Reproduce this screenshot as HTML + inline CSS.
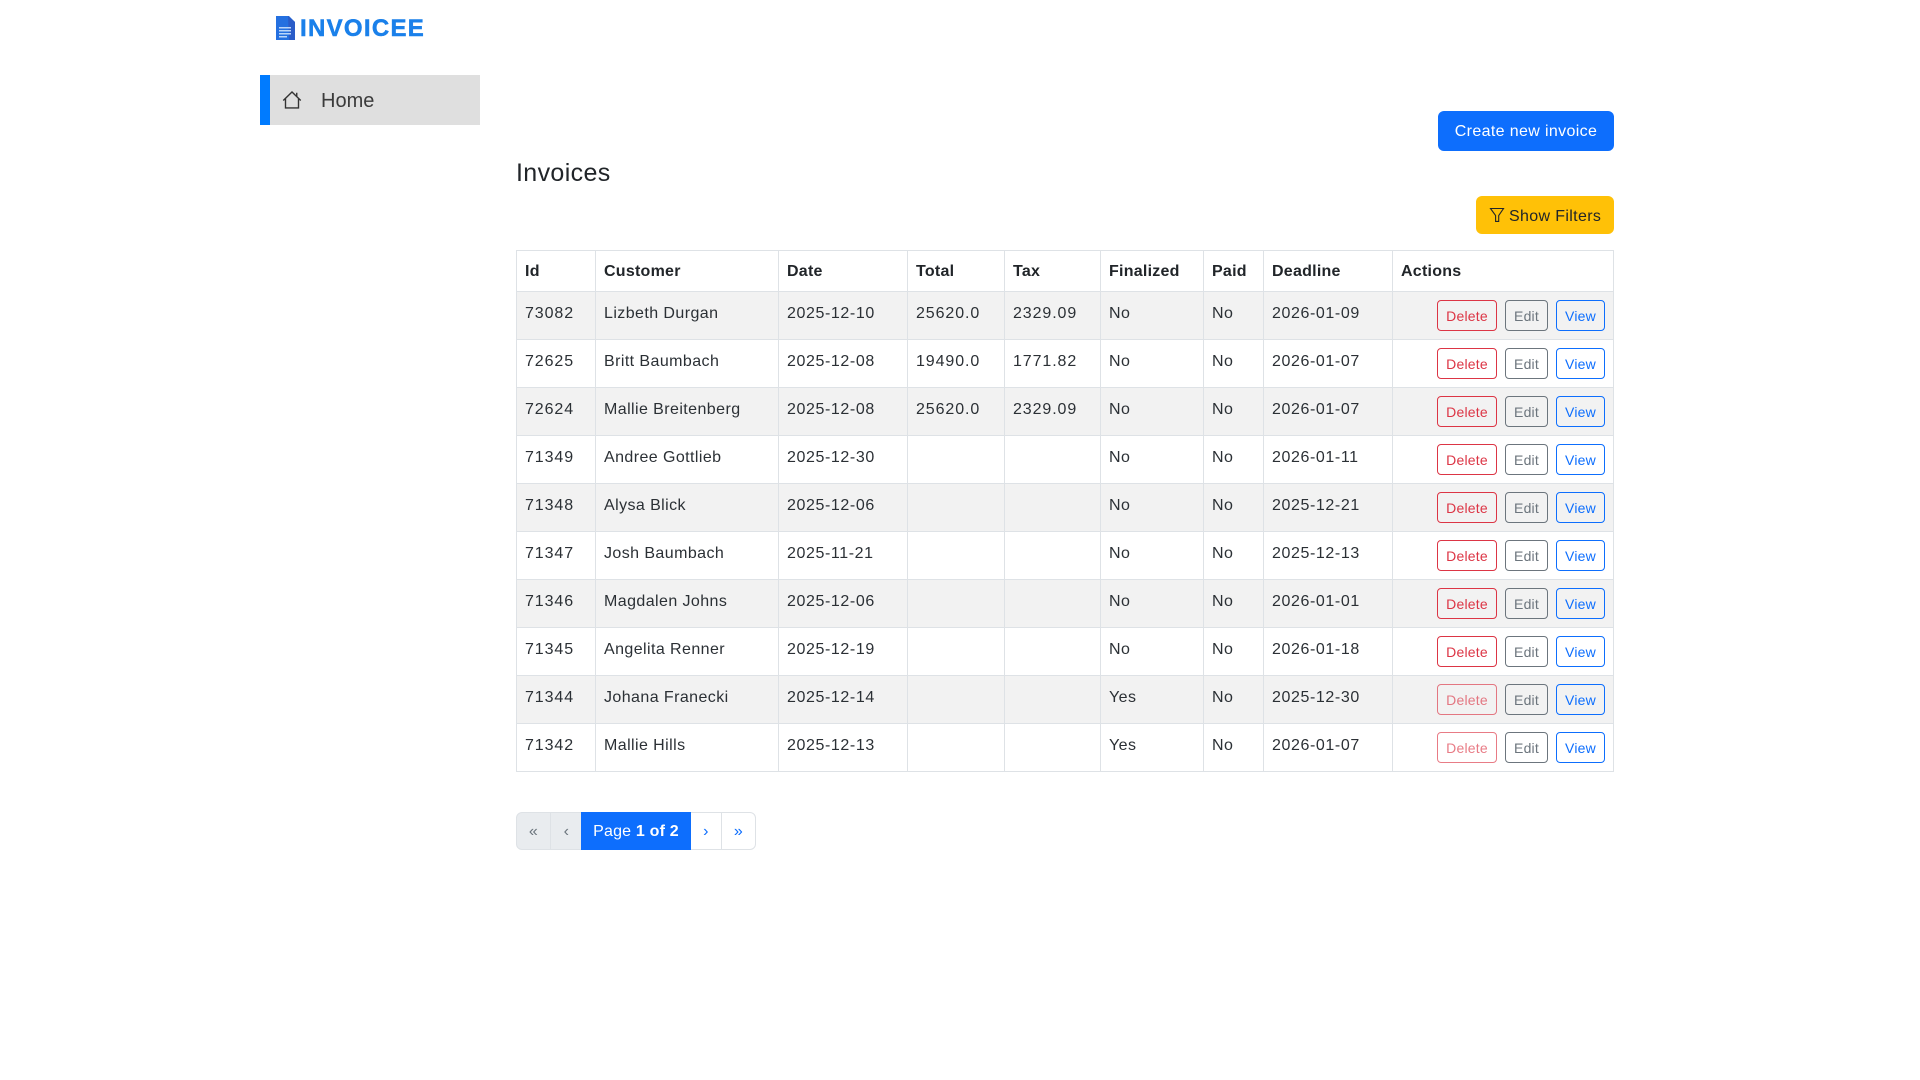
<!DOCTYPE html>
<html><head><meta charset="utf-8"><title>Invoices</title>
<style>
*{box-sizing:border-box}
html,body{margin:0;padding:0;background:#fff}
body{width:1920px;height:1080px;position:relative;overflow:hidden;font-family:"Liberation Sans",sans-serif;color:#212529;font-size:16px;letter-spacing:.42px}
.abs{position:absolute}
table{position:absolute;left:516px;top:250px;width:1097px;border-collapse:collapse;table-layout:fixed}
th,td{border:1px solid #dee2e6;padding:9px 8px 7px;line-height:24px;text-align:left;vertical-align:top;font-weight:400;position:relative;white-space:nowrap;color:#2b3035}
th{font-weight:700;color:#212529;letter-spacing:.25px;height:41px}
td{height:48px;padding-top:10px;padding-bottom:6px}
td:nth-child(1),td:nth-child(4),td:nth-child(5){letter-spacing:.9px}
td:nth-child(3),td:nth-child(8){letter-spacing:.6px}
tbody tr:nth-child(odd) td{background:#f2f2f2}
.b{position:absolute;top:8px;height:31px;border:1px solid;border-radius:4px;font-size:14px;line-height:30px;text-align:center;letter-spacing:.2px;background:transparent}
.d{left:44px;width:60px;border-color:#dc3545;color:#dc3545}
.e{left:112px;width:43px;border-color:#6c757d;color:#6c757d}
.v{left:163px;width:49px;border-color:#0d6efd;color:#0d6efd}
.o{opacity:.65}
.pg{position:absolute;top:812px;height:38px;line-height:38px;text-align:center;border:1px solid #dee2e6;font-size:16px}
</style></head><body>
<svg class="abs" style="left:276px;top:16px" width="20" height="24" viewBox="0 0 20 24"><path d="M0 0H13L19 6V24H0Z" fill="#2470e0"/><path d="M12 0L19 6V24H13Z" fill="#2a5cc8"/><path d="M3 11H15V12.5H3ZM3 14H15V15.5H3ZM3 17H15V18.5H3ZM3 20H11V21.5H3Z" fill="#bcd6f8"/></svg>
<div class="abs" style="left:300px;top:15px;font-size:24px;line-height:28px;font-weight:700;color:#1a80ea;letter-spacing:1.3px;-webkit-text-stroke:.5px #1a80ea">INVOICEE</div>
<div class="abs" style="left:260px;top:75px;width:220px;height:50px;background:#dfdfdf;border-left:10px solid #007bff"></div>
<svg class="abs" style="left:282px;top:90px" width="20" height="20" viewBox="0 0 16 16"><path d="M1 8.4L8 1.6L15 8.4M2.8 7V14.3H13.2V7M11.8 2.2V5" fill="none" stroke="#333" stroke-width="1.1"/></svg>
<div class="abs" style="left:321px;top:87px;font-size:20px;line-height:28px;color:#3b3b3b;letter-spacing:0">Home</div>
<div class="abs" style="left:1438px;top:111px;width:176px;height:40px;background:#0d6efd;border-radius:6px;color:#fff;line-height:42px;text-align:center;letter-spacing:.36px">Create new invoice</div>
<div class="abs" style="left:516px;top:156px;font-size:25px;line-height:34px;letter-spacing:.36px">Invoices</div>
<div class="abs" style="left:1476px;top:196px;width:138px;height:38px;background:#ffc107;border-radius:6px"></div>
<svg class="abs" style="left:1489px;top:207px" width="16" height="16" viewBox="0 0 16 16"><path d="M1.5 1.5H14.5L9.7 8.6V14.4H6.6V8.6Z" fill="none" stroke="#212529" stroke-width="1.1"/></svg>
<div class="abs" style="left:1509px;top:205px;line-height:24px;color:#212529;letter-spacing:.35px">Show Filters</div>
<table>
<colgroup><col style="width:79px"><col style="width:183px"><col style="width:129px"><col style="width:97px"><col style="width:96px"><col style="width:103px"><col style="width:60px"><col style="width:129px"><col style="width:221px"></colgroup>
<thead><tr><th>Id</th><th>Customer</th><th>Date</th><th>Total</th><th>Tax</th><th>Finalized</th><th>Paid</th><th>Deadline</th><th>Actions</th></tr></thead>
<tbody>
<tr><td>73082</td><td>Lizbeth Durgan</td><td>2025-12-10</td><td>25620.0</td><td>2329.09</td><td>No</td><td>No</td><td>2026-01-09</td><td><div class="b d">Delete</div><div class="b e">Edit</div><div class="b v">View</div></td></tr>
<tr><td>72625</td><td>Britt Baumbach</td><td>2025-12-08</td><td>19490.0</td><td>1771.82</td><td>No</td><td>No</td><td>2026-01-07</td><td><div class="b d">Delete</div><div class="b e">Edit</div><div class="b v">View</div></td></tr>
<tr><td>72624</td><td>Mallie Breitenberg</td><td>2025-12-08</td><td>25620.0</td><td>2329.09</td><td>No</td><td>No</td><td>2026-01-07</td><td><div class="b d">Delete</div><div class="b e">Edit</div><div class="b v">View</div></td></tr>
<tr><td>71349</td><td>Andree Gottlieb</td><td>2025-12-30</td><td></td><td></td><td>No</td><td>No</td><td>2026-01-11</td><td><div class="b d">Delete</div><div class="b e">Edit</div><div class="b v">View</div></td></tr>
<tr><td>71348</td><td>Alysa Blick</td><td>2025-12-06</td><td></td><td></td><td>No</td><td>No</td><td>2025-12-21</td><td><div class="b d">Delete</div><div class="b e">Edit</div><div class="b v">View</div></td></tr>
<tr><td>71347</td><td>Josh Baumbach</td><td>2025-11-21</td><td></td><td></td><td>No</td><td>No</td><td>2025-12-13</td><td><div class="b d">Delete</div><div class="b e">Edit</div><div class="b v">View</div></td></tr>
<tr><td>71346</td><td>Magdalen Johns</td><td>2025-12-06</td><td></td><td></td><td>No</td><td>No</td><td>2026-01-01</td><td><div class="b d">Delete</div><div class="b e">Edit</div><div class="b v">View</div></td></tr>
<tr><td>71345</td><td>Angelita Renner</td><td>2025-12-19</td><td></td><td></td><td>No</td><td>No</td><td>2026-01-18</td><td><div class="b d">Delete</div><div class="b e">Edit</div><div class="b v">View</div></td></tr>
<tr><td>71344</td><td>Johana Franecki</td><td>2025-12-14</td><td></td><td></td><td>Yes</td><td>No</td><td>2025-12-30</td><td><div class="b d o">Delete</div><div class="b e">Edit</div><div class="b v">View</div></td></tr>
<tr><td>71342</td><td>Mallie Hills</td><td>2025-12-13</td><td></td><td></td><td>Yes</td><td>No</td><td>2026-01-07</td><td><div class="b d o">Delete</div><div class="b e">Edit</div><div class="b v">View</div></td></tr>
</tbody></table>
<div class="pg" style="left:516px;width:35px;background:#e9ecef;color:#6c757d;border-radius:6px 0 0 6px">«</div>
<div class="pg" style="left:550px;width:32px;background:#e9ecef;color:#6c757d;border-left:1px solid #dee2e6;border-right:0">‹</div>
<div class="pg" style="left:581px;width:110px;background:#0d6efd;color:#fff;border-color:#0d6efd;letter-spacing:.2px">Page <b>1 of 2</b></div>
<div class="pg" style="left:691px;width:31px;color:#0d6efd;border-left:0">›</div>
<div class="pg" style="left:721px;width:35px;color:#0d6efd;border-radius:0 6px 6px 0">»</div>
</body></html>
